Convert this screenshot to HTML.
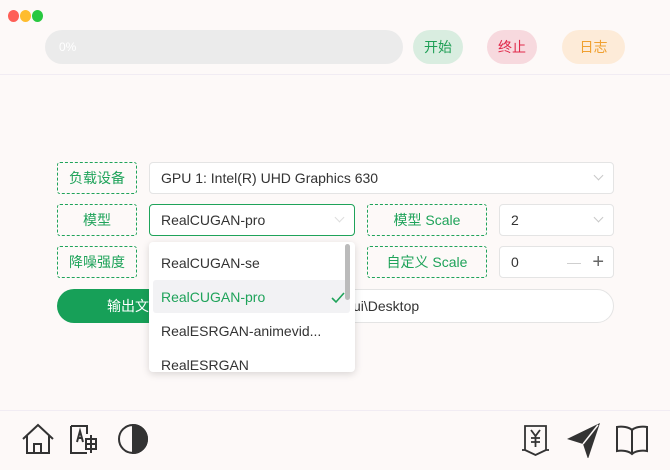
<!DOCTYPE html>
<html><head><meta charset="utf-8"><style>
*{box-sizing:border-box;margin:0;padding:0}
body{width:670px;height:470px;background:#fdf9f8;font-family:"Liberation Sans","Noto Sans CJK SC",sans-serif;position:relative;overflow:hidden;font-size:14px;color:#333}
.a{position:absolute}
.dot{width:11px;height:12px;border-radius:50%;top:10px}
.btn{top:30px;height:34px;width:50px;border-radius:17px;text-align:center;line-height:34px;font-size:14px}
.lab{border:1px dashed #1fa35a;border-radius:3px;color:#1fa35a;text-align:center;font-size:14px;line-height:30px;height:32px}
.sel{background:#fff;border:1px solid #e4e4e4;border-radius:4px;height:32px;line-height:30px;padding-left:11px;color:#333}
.chev{position:absolute;right:11px;top:9px;width:7px;height:7px;border-right:1px solid #c8c8c8;border-bottom:1px solid #c8c8c8;transform:rotate(45deg)}
.it{position:absolute;left:12px;font-size:14px;color:#333}
</style></head><body>
<div class="a dot" style="left:8px;background:#fe5f57"></div>
<div class="a dot" style="left:20px;background:#febc2e"></div>
<div class="a dot" style="left:32px;background:#28c840"></div>
<div class="a" style="left:45px;top:30px;width:358px;height:34px;border-radius:17px;background:#ebebeb;color:#fff;font-size:12px;line-height:34px;padding-left:14px">0%</div>
<div class="a btn" style="left:413px;background:#d9ede0;color:#1e9e55">开始</div>
<div class="a btn" style="left:487px;background:#f7d9de;color:#e0294a">终止</div>
<div class="a btn" style="left:562px;width:63px;background:#fdebd8;color:#f0a030">日志</div>
<div class="a" style="left:0;top:74px;width:670px;height:1px;background:#f1ecf3"></div>

<div class="a lab" style="left:57px;top:162px;width:80px">负载设备</div>
<div class="a sel" style="left:149px;top:162px;width:465px">GPU 1: Intel(R) UHD Graphics 630<div class="chev"></div></div>
<div class="a lab" style="left:57px;top:204px;width:80px">模型</div>
<div class="a sel" style="left:149px;top:204px;width:206px;border-color:#1fa35a">RealCUGAN-pro<div class="chev" style="border-color:#ddd"></div></div>
<div class="a lab" style="left:367px;top:204px;width:120px">模型 Scale</div>
<div class="a sel" style="left:499px;top:204px;width:115px">2<div class="chev"></div></div>
<div class="a lab" style="left:57px;top:246px;width:80px">降噪强度</div>
<div class="a lab" style="left:367px;top:246px;width:120px">自定义 Scale</div>
<div class="a sel" style="left:499px;top:246px;width:115px">0<span style="position:absolute;right:32px;color:#ccc">—</span><span style="position:absolute;right:9px;color:#666;font-size:20px">+</span></div>
<div class="a" style="left:57px;top:289px;width:120px;height:34px;border-radius:17px;background:#17a058;color:#fff;line-height:34px;padding-left:50px">输出文件夹</div>
<div class="a" style="left:300px;top:289px;width:314px;height:34px;border-radius:17px;background:#fff;border:1px solid #e4e4e4;line-height:32px;padding-left:52px">ui\Desktop</div>

<div class="a" style="left:149px;top:242px;width:206px;height:130px;background:#fff;border-radius:4px;box-shadow:0 2px 8px rgba(0,0,0,.15);overflow:hidden">
<div class="a" style="left:4px;top:38px;width:197px;height:33px;background:#f2f2f4;border-radius:3px"></div>
<div class="a" style="left:196px;top:2px;width:5px;height:56px;background:#bbb;border-radius:3px"></div>
<div class="it" style="top:13px">RealCUGAN-se</div>
<div class="it" style="top:47px;color:#1fa35a">RealCUGAN-pro</div>
<svg class="a" style="left:182px;top:50px" width="14" height="12"><path d="M1 6l4 4 8-9" stroke="#1fa35a" stroke-width="1.6" fill="none"/></svg>
<div class="it" style="top:81px">RealESRGAN-animevid...</div>
<div class="it" style="top:115px">RealESRGAN</div>
</div>

<div class="a" style="left:0;top:410px;width:670px;height:1px;background:#f1ecf3"></div>
<svg class="a" style="left:20px;top:422px" width="640" height="36" fill="none" stroke="#333" stroke-width="2">
<path d="M3 17L18 3 33 17M7 14v17h22V14M14 31v-9h7v9"/>
<path d="M51 4h16v8M51 4v27h16M57 20l3-11 3 11M58 16h4M66 17h10v10h-10zM71 13v18M66 22h10"/>
<circle cx="113" cy="17" r="14"/><path d="M113 3a14 14 0 0 1 0 28z" fill="#333"/>
<path d="M505 4h21v24l-10.5 5-10.5-5zM502 28h3M526 28h3M511 8l4.5 6 4.5-6M515.5 14v11M511 16h9M511 20h9" stroke-width="1.8"/>
<path d="M547 17l33-16-12 36-5-15z" fill="#333" stroke="none"/><path d="M563 22l15-19" stroke="#fdf9f8" stroke-width="1.5"/>
<path d="M597 5c5-1 12 0 15 3 3-3 10-4 15-3v24c-5-1-12 0-15 3-3-3-10-4-15-3zM612 8v24"/>
</svg>
</body></html>
